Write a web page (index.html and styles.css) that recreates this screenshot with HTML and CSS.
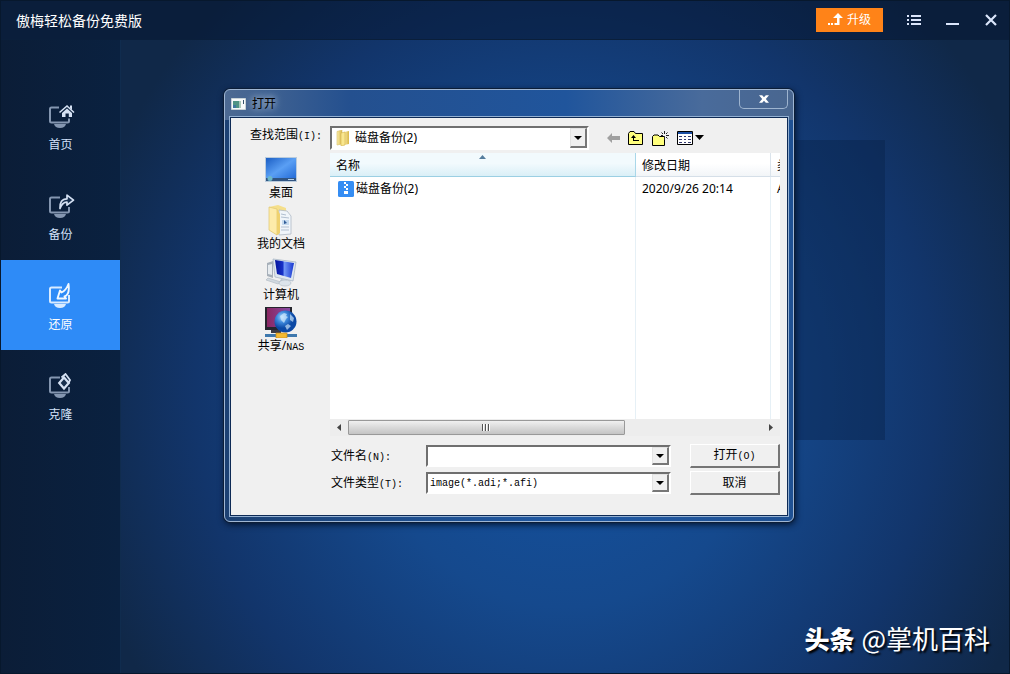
FILE: index.html
```html
<!DOCTYPE html>
<html lang="zh-CN">
<head>
<meta charset="utf-8">
<title>傲梅轻松备份免费版</title>
<link rel="stylesheet" href="styles.css">
</head>
<body>
<div class="app">
  <header class="app-header">
    <h1 class="app-title">傲梅轻松备份免费版</h1>
    <button class="upgrade" type="button">
      <svg width="15" height="14" viewBox="0 0 15 14"><path d="M10 0l5 5h-3.500v7H6.500v-2H9V5H5z" fill="#fff"/><path d="M0 10h2v2H0zM3 10h2v2H3z" fill="#fff"/></svg>
      <span>升级</span>
    </button>
    <button class="win-btn" type="button" aria-label="菜单">
      <svg width="14" height="12" viewBox="0 0 14 12" fill="#dbe6fb"><path d="M0 1h2v2H0zM4 1h10v2H4zM0 5h2v2H0zM4 5h10v2H4zM0 9h2v2H0zM4 9h10v2H4z"/></svg>
    </button>
    <button class="win-btn" type="button" aria-label="最小化">
      <svg width="14" height="12" viewBox="0 0 14 12"><path d="M0 9h13v2H0z" fill="#dbe6fb"/></svg>
    </button>
    <button class="win-btn" type="button" aria-label="关闭程序">
      <svg width="12" height="12" viewBox="0 0 12 12"><path d="M1 1l10 10M11 1L1 11" stroke="#dbe6fb" stroke-width="2.200"/></svg>
    </button>
  </header>

  <div class="app-body">
    <nav class="sidebar">
      <a class="nav-item" href="#home">
        <svg width="28" height="26" viewBox="0 0 28 26">
          <path d="M12 4.500H4.500Q3 4.500 3 6v12q0 1.500 1.500 1.500h16q1.500 0 1.500-1.500v-2.500" fill="none" stroke="#8496b0" stroke-width="2"/>
          <path d="M7 21h12q-1 4-6 4t-6-4z" fill="#8496b0"/>
          <path d="M12.500 9.500L20 3l7 6.500" fill="none" stroke="#d5e1f3" stroke-width="1.600"/><path d="M23 2.500h2V7l-2-2z" fill="#d5e1f3"/>
          <path d="M20 5.500l5 4.500V14h-3.200v-3.500h-3.300V14H15V10z" fill="#d5e1f3"/>
        </svg>
        <span>首页</span>
      </a>
      <a class="nav-item" href="#backup">
        <svg width="28" height="26" viewBox="0 0 28 26">
          <path d="M13 4.500H4.500Q3 4.500 3 6v12q0 1.500 1.500 1.500h16q1.500 0 1.500-1.500v-4" fill="none" stroke="#8496b0" stroke-width="2"/>
          <path d="M7 21h12q-1 4-6 4t-6-4z" fill="#8496b0"/>
          <path d="M13 15.500Q12.500 6 20 5.800V2.200l6.500 5-6.500 5V9.200Q15.500 9 13 15.500z" fill="#18304f" stroke="#d5e1f3" stroke-width="1.700" stroke-linejoin="round"/>
        </svg>
        <span>备份</span>
      </a>
      <a class="nav-item nav-item-active" href="#restore" aria-current="page">
        <svg width="28" height="26" viewBox="0 0 28 26">
          <path d="M15 4.500H4.500Q3 4.500 3 6v12q0 1.500 1.500 1.500h16q1.500 0 1.500-1.500v-6" fill="none" stroke="#d9ebff" stroke-width="2"/>
          <path d="M7 21h12q-1 4-6 4t-6-4z" fill="#d9ebff"/>
          <path d="M21.500 1Q23 12 17.500 13.500L19 15.500H10.500L13 7.500l1.500 2Q19 7.500 21.500 1z" fill="#2e8bf7" stroke="#f1f8ff" stroke-width="1.900" stroke-linejoin="round"/>
        </svg>
        <span>还原</span>
      </a>
      <a class="nav-item" href="#clone">
        <svg width="28" height="26" viewBox="0 0 28 26">
          <path d="M13 4.500H4.500Q3 4.500 3 6v12q0 1.500 1.500 1.500h16q1.500 0 1.500-1.500v-4" fill="none" stroke="#8496b0" stroke-width="2"/>
          <path d="M7 21h12q-1 4-6 4t-6-4z" fill="#8496b0"/>
          <path d="M14.500 4.500l4-3.500L23 7l-1.500 3" fill="none" stroke="#d5e1f3" stroke-width="1.800"/>
          <path d="M17 4.500l4.800 5.500-4.800 5.500L12.200 10z" fill="#18304f" stroke="#d5e1f3" stroke-width="2.200"/>
        </svg>
        <span>克隆</span>
      </a>
    </nav>
    <main class="workspace">
      <div class="drop-panel"></div>
      <p class="watermark"><b>头条</b><span>@掌机百科</span></p>
    </main>
  </div>

  <section class="dialog" role="dialog" aria-labelledby="dialog-title">
    <header class="dialog-head">
      <svg width="15" height="12" viewBox="0 0 15 12"><path fill="#f7fafa" stroke="#c7d2d6" d="M.5.5h14v11H.5z"/><path fill="#4f9484" d="M2 3h6v7H2z"/><path fill="#3f789f" d="M2 7h3v3H2z"/><path fill="#a9c8b9" d="M8 3h2v7H8z"/><path fill="#35536c" d="M12 2h1v4h-1z"/></svg>
      <h2 class="dialog-title" id="dialog-title">打开</h2>
      <button class="dialog-close" type="button" aria-label="关闭">
        <svg width="10" height="8" viewBox="0 0 11 8"><path d="M0 0h3.500l2 2.200L7.500 0H11L7.500 4 11 8H7.500l-2-2.200L3.500 8H0l3.500-4z" fill="#fff"/></svg>
      </button>
    </header>

    <div class="dialog-body">
      <label class="look-label" for="look-in">查找范围<span class="key">(I):</span></label>
      <div class="look-row">
        <div class="combo combo-look">
          <svg class="combo-icon" width="15" height="16" viewBox="0 0 15 16"><defs><linearGradient id="fold" x2="1"><stop stop-color="#fbeeaa"/><stop offset="1" stop-color="#d9b748"/></linearGradient></defs><path d="M1 1.500L6 0v14l-5 1z" fill="url(#fold)" stroke="#d8c067" stroke-width=".6"/><path d="M8 2l5-1v13l-5 1z" fill="url(#fold)"/><path d="M5 3l4-1v13l-4 1z" fill="#f9e78f" stroke="#d3b24c" stroke-width=".6"/></svg>
          <select class="combo-field" id="look-in"><option>磁盘备份(2)</option></select>
          <span class="combo-arrow"></span>
        </div>
        <div class="tools">
          <button class="tool" type="button" aria-label="后退"><svg width="13" height="10" viewBox="0 0 13 10"><path d="M0 5l5-5v3h8v4H5v3z" fill="#a0a0a0"/></svg></button>
          <button class="tool" type="button" aria-label="向上一级"><svg width="16" height="14" viewBox="0 0 16 14"><path d="M.5 13.500v-11L2 .5h4l1.500 2h7v11z" fill="#ffff7d" stroke="#000"/><path d="M5.500 4L8 7H6v2h5v1H5V7H3z" fill="#000"/></svg></button>
          <button class="tool" type="button" aria-label="新建文件夹"><svg width="17" height="15" viewBox="0 0 17 15"><path d="M.5 14.500v-9L2 4h4l1.500 1.500h5v9z" fill="#ffff7d" stroke="#000"/><path d="M12.500 0v3M12.500 6v3M9 4.500h2M14 4.500h3M9.500 1.500l1.500 1.500M15.500 1.500L14 3M15.500 7.500L14 6" stroke="#222"/></svg></button>
          <button class="tool" type="button" aria-label="视图"><svg width="27" height="14" viewBox="0 0 27 14"><path d="M.5.500h15v13H.5z" fill="#fff" stroke="#000"/><path d="M1 1h14v2H1z" fill="#1b4fa5"/><path d="M2 5.500h3M7 5.500h2M11 5.500h3M2 8.500h3M7 8.500h2M11 8.500h3M2 11.500h3M7 11.500h2M11 11.500h3" stroke="#333a70"/><path d="M18 4h9l-4.500 5z" fill="#000"/></svg></button>
        </div>
      </div>

      <div class="places">
        <a class="place" href="#desktop">
          <svg width="32" height="32" viewBox="0 0 32 32"><defs><linearGradient id="desk" x2="1" y2="1"><stop stop-color="#1b5ec4"/><stop offset=".5" stop-color="#5a9ff4"/><stop offset="1" stop-color="#2169d6"/></linearGradient></defs><path d="M0 4h32v25H0z" fill="#b9cbdc"/><path d="M1 5h30v21H1z" fill="url(#desk)"/><path d="M1 25h30v3H1z" fill="#315582"/><circle cx="5" cy="25.500" r="2.500" fill="#6bb7c9"/><path d="M23 26.500h6" stroke="#b8d2eb"/></svg>
          <span>桌面</span>
        </a>
        <a class="place" href="#documents">
          <svg width="32" height="32" viewBox="0 0 32 32"><path d="M4 3l9-2 8 3v24l-9 3-8-5z" fill="#f5df8b"/><path d="M14 6l8 1 4 5v18l-12 1z" fill="#f0f5fa" stroke="#aeb9c5" stroke-width=".8"/><path d="M16 10l5 1M16 13l8 1M16 23h8M16 26h8" stroke="#b1bfd0"/><path d="M17 16h7v5h-7z" fill="#c5daee"/><path d="M19 16l3 3-3 1z" fill="#315d98"/><path d="M4 3l8 2v26l-8-5z" fill="#fdebaa" stroke="#dfc66e" stroke-width=".7"/><path d="M12 5l3 5v19l-3 2z" fill="#efd16f"/></svg>
          <span>我的文档</span>
        </a>
        <a class="place" href="#computer">
          <svg width="32" height="32" viewBox="0 0 32 32"><defs><linearGradient id="scr" x2="1"><stop stop-color="#05139b"/><stop offset=".4" stop-color="#1630c6"/><stop offset=".5" stop-color="#7095f5"/><stop offset="1" stop-color="#1837d0"/></linearGradient></defs><path d="M2 8l6-2v17l-6-2z" fill="#a6afb9"/><path d="M3 10l4-1v11l-4-1z" fill="#e6ebef"/><path d="M8 4l23 3-3 19-18-4z" fill="#dfe7ef" stroke="#a1afbe" stroke-width=".7"/><path d="M10 5l19 3-3 15-14-4z" fill="url(#scr)"/><path d="M16 24l6 1v3h-8z" fill="#bbc6d1"/><path d="M3 23l13 4-3 2-12-4z" fill="#d0d8df" stroke="#a4afb8" stroke-width=".5"/><ellipse cx="20" cy="28" rx="6" ry="3" fill="#dce4eb" stroke="#acb8c2" stroke-width=".6"/></svg>
          <span>计算机</span>
        </a>
        <a class="place" href="#nas">
          <svg width="32" height="32" viewBox="0 0 32 32"><defs><linearGradient id="nas" x2="1"><stop stop-color="#8a2762"/><stop offset="1" stop-color="#884ba6"/></linearGradient><radialGradient id="globe" cx=".35" cy=".3"><stop stop-color="#a8d8ff"/><stop offset=".5" stop-color="#3d87da"/><stop offset="1" stop-color="#0c49a5"/></radialGradient></defs><path d="M0 1h27v23H0z" fill="#25252d"/><path d="M2 2h23v19H2z" fill="url(#nas)"/><path d="M6 24h10v3H6z" fill="#3b3b44"/><circle cx="20.500" cy="15.500" r="11" fill="url(#globe)"/><path d="M15 10l4-3 3 1-1 2 2 1-2 2-2 4-3-3zM25 8l4 4-1 4-3-2zM20 20l3-2 3 2-4 4z" fill="#d9f0ff" opacity=".65"/><path d="M0 28h32v3H0z" fill="#3e78ad"/><path d="M11 27h11v5H11z" fill="#f3ba32" stroke="#c68b1c" stroke-width=".7"/></svg>
          <span>共享/<span class="key">NAS</span></span>
        </a>
      </div>

      <div class="file-list">
        <div class="file-view">
          <table class="files">
            <colgroup><col class="col-name"><col class="col-date"><col></colgroup>
            <thead>
              <tr><th class="sorted">名称<svg class="sort-mark" width="7" height="4" viewBox="0 0 7 4"><path d="M0 4l3.500-4L7 4z" fill="#557d9d"/></svg></th><th>修改日期</th><th>类型</th></tr>
            </thead>
            <tbody>
              <tr class="file">
                <td><div class="file-name"><svg width="16" height="16" viewBox="0 0 16 16"><rect width="16" height="16" rx="1.500" fill="#358df3"/><path d="M6 1h2v2H6zM8 3h2v2H8zM6 5h2v2H6zM8 7h2v2H8zM6 10h4v3H6z" fill="#fff"/></svg><span>磁盘备份(2)</span></div></td>
                <td>2020/9/26 20:14</td>
                <td>AFI</td>
              </tr>
              <tr><td></td><td></td><td></td></tr>
            </tbody>
          </table>
        </div>
        <div class="scrollbar">
          <button class="scroll-btn" type="button" aria-label="向左滚动"><svg width="4" height="7" viewBox="0 0 4 7"><path d="M4 0v7L0 3.500z" fill="#444"/></svg></button>
          <div class="scroll-track"><div class="scroll-thumb"><svg width="9" height="7" viewBox="0 0 9 7"><path d="M.5 0v7M3.500 0v7M6.500 0v7" stroke="#555"/><path d="M1.500 0v7M4.500 0v7M7.500 0v7" stroke="#fff"/></svg></div></div>
          <button class="scroll-btn" type="button" aria-label="向右滚动"><svg width="4" height="7" viewBox="0 0 4 7"><path d="M0 0v7l4-3.500z" fill="#444"/></svg></button>
        </div>
      </div>

      <form class="open-form">
        <label for="file-name">文件名<span class="key">(N):</span></label>
        <div class="combo">
          <input class="combo-field" id="file-name" type="text">
          <button class="combo-arrow" type="button" aria-label="文件名记录"></button>
        </div>
        <button class="action" type="button">打开<span class="key">(O)</span></button>
        <label for="file-type">文件类型<span class="key">(T):</span></label>
        <div class="combo">
          <select class="combo-field key" id="file-type"><option>image(*.adi;*.afi)</option></select>
          <span class="combo-arrow"></span>
        </div>
        <button class="action" type="button">取消</button>
      </form>
    </div>
  </section>
</div>
</body>
</html>
```
FILE: styles.css
```css
* { box-sizing: border-box; }

body {
  margin: 0;
  font-family: "Noto Sans", "Noto Sans CJK SC", sans-serif;
  font-size: 12px;
  line-height: 16px;
  color: #000;
}

button, input, select {
  font: inherit;
  color: inherit;
  margin: 0;
  padding: 0;
  border: 0;
  border-radius: 0;
  background: none;
}

svg { display: block; flex: none; }
h1, h2, p { margin: 0; font-weight: 400; }
a { color: inherit; text-decoration: none; }

.key { font-family: "Liberation Mono", monospace; font-size: 10px; }

/* Application window */
.app {
  position: relative;
  display: flex;
  flex-direction: column;
  min-height: 100vh;
  border: 1px solid #07182d;
  background: radial-gradient(ellipse 500px 540px at 56% 58%, #1453a2 0%, #15498d 40%, #12356b 74%, #102848 100%);
}

.app-header {
  display: flex;
  align-items: center;
  height: 39px;
  padding: 0 12px 0 15px;
  border-bottom: 1px solid #0a1f3b;
  background: rgba(4, 20, 45, .5);
  color: #fff;
}

.app-title {
  flex: 1;
  font-family: "Noto Sans CJK SC", sans-serif;
  font-size: 14px;
  line-height: 20px;
  font-weight: 400;
}

.upgrade {
  display: flex;
  align-items: center;
  justify-content: center;
  gap: 4px;
  width: 67px;
  height: 24px;
  margin-right: 24px;
  background: #ff8318;
}

.win-btn { display: flex; }
.win-btn + .win-btn { margin-left: 25px; }

.app-body { flex: 1; display: flex; }

.sidebar {
  width: 120px;
  padding-top: 40px;
  border-right: 1px solid #102c4e;
  background: linear-gradient(90deg, #0b1d37, #0a2140);
}

.nav-item {
  display: flex;
  flex-direction: column;
  align-items: center;
  gap: 8px;
  height: 90px;
  padding-top: 23px;
  font-size: 12px;
  color: #d3e2fa;
}

.nav-item-active { background: #2e8bf7; color: #fff; }

.workspace {
  position: relative;
  flex: 1;
  padding: 100px 124px;
}

.drop-panel { height: 300px; background: rgba(8, 32, 70, .4); }

.watermark {
  position: absolute;
  right: 19px;
  bottom: 16px;
  display: flex;
  gap: 7px;
  font-family: "Noto Sans CJK SC", sans-serif;
  font-size: 26px;
  line-height: 38px;
  color: #fff;
  text-shadow: 2px 2px 2px #000;
}

.watermark b { font-size: 25px; font-weight: 900; }

/* Open dialog */
.dialog {
  position: absolute;
  left: 223px;
  top: 88px;
  width: 570px;
  padding: 0 5px 5px;
  border: 1px solid #9fb6d3;
  border-radius: 6px;
  background: linear-gradient(90deg, #4d6a92 0%, #24508f 22%, #20559c 60%, #496b9b 84%, #49668f 100%) top / 100% 30px no-repeat, linear-gradient(90deg, #1c4173, #2059a3 60%, #1f5193);
  box-shadow: 0 0 0 1px #0c1e38, 1px 2px 7px #020d20;
}

.dialog-head {
  display: flex;
  align-items: center;
  gap: 6px;
  height: 27px;
  padding-left: 1px;
}

.dialog-title {
  flex: 1;
  font-size: 12px;
  line-height: 16px;
  text-shadow: 0 0 6px #b4c5da, 0 0 9px #b4c5da;
}

.dialog-close {
  display: flex;
  align-items: center;
  justify-content: center;
  align-self: flex-start;
  width: 49px;
  height: 19px;
  border: 1px solid #9eb4cf;
  border-top: 0;
  border-radius: 0 0 5px 5px;
}

.dialog-body {
  display: grid;
  grid-template-columns: 80px 1fr;
  row-gap: 3px;
  padding: 8px 7px 20px 19px;
  border: 1px solid #0e2a55;
  outline: 1px solid #93b0d2;
  background: #f0f0f0;
}

.look-label { padding-top: 1px; }

.look-row { display: flex; gap: 18px; }

.combo {
  display: flex;
  align-items: center;
  min-width: 0;
  height: 22px;
  border: 2px solid #6f6f6f;
  border-right-color: #fff;
  border-bottom-color: #fff;
  background: #fff;
}

.combo-look { flex: 1; height: 24px; padding-left: 4px; }
.combo-icon { margin-right: 4px; }

.combo-field {
  flex: 1;
  min-width: 0;
  height: 100%;
  appearance: none;
  outline: 0;
}

.combo-field.key { padding: 1px 0 0 2px; }

.combo-arrow {
  display: flex;
  align-items: center;
  justify-content: center;
  align-self: stretch;
  width: 17px;
  border: 1px solid #e3e3e3;
  border-right: 2px solid #777;
  border-bottom: 2px solid #777;
  background: #f0f0f0;
}

.combo-arrow::after {
  content: "";
  border: 4px solid transparent;
  border-top-color: #000;
  border-bottom: 0;
}

.tools { display: flex; align-items: center; gap: 8px; width: 173px; }
.tool { display: flex; }

.places { display: flex; flex-direction: column; width: 62px; }

.place {
  display: flex;
  flex-direction: column;
  align-items: center;
  height: 51px;
  white-space: nowrap;
}

.file-list { display: flex; flex-direction: column; min-width: 0; height: 283px; }

.file-view { flex: 1; overflow: hidden; background: #fff; }

.files {
  width: 100%;
  height: 100%;
  table-layout: fixed;
  border-collapse: separate;
  border-spacing: 0;
}

.col-name { width: 306px; }
.col-date { width: 135px; }

.files th, .files td {
  padding: 0 0 0 6px;
  overflow: hidden;
  text-align: left;
  font-weight: 400;
  white-space: nowrap;
  border-right: 1px solid #e6f0f6;
}

.files th {
  position: relative;
  height: 24px;
  padding-top: 2px;
  border-bottom: 1px solid #d5dfe8;
  border-right-color: #dbe4ec;
  background: linear-gradient(#fff 45%, #f2f5f8);
}

.files th.sorted {
  border-bottom-color: #9bcfe3;
  border-right-color: #a9d7e9;
  background: linear-gradient(#f2fafd 45%, #daeff7);
}

.files th:last-child, .files td:last-child { border-right: 0; }

.sort-mark { position: absolute; left: 50%; top: 2px; margin-left: -4px; }

.file { height: 23px; }

.file-name { display: flex; align-items: center; gap: 2px; padding-left: 2px; }

.scrollbar { display: flex; height: 17px; background: #ededed; }

.scroll-btn {
  display: flex;
  align-items: center;
  justify-content: center;
  width: 18px;
}

.scroll-track { flex: 1; padding: 1px 0; }

.scroll-thumb {
  display: flex;
  align-items: center;
  justify-content: center;
  width: 67%;
  height: 15px;
  border: 1px solid #999;
  border-radius: 1px;
  background: linear-gradient(#f0f0f0, #d9d9d9 50%, #c4c4c4);
}

.open-form {
  grid-column: 2;
  display: grid;
  grid-template-columns: 96px 1fr 90px;
  align-items: center;
  row-gap: 3px;
  margin-top: 5px;
}

.open-form .combo { margin-right: 19px; }
.open-form label { padding: 2px 0 0 1px; }

.action {
  height: 24px;
  border: 1px solid #fff;
  border-right: 2px solid #757575;
  border-bottom: 2px solid #757575;
  background: #f0f0f0;
}
```
